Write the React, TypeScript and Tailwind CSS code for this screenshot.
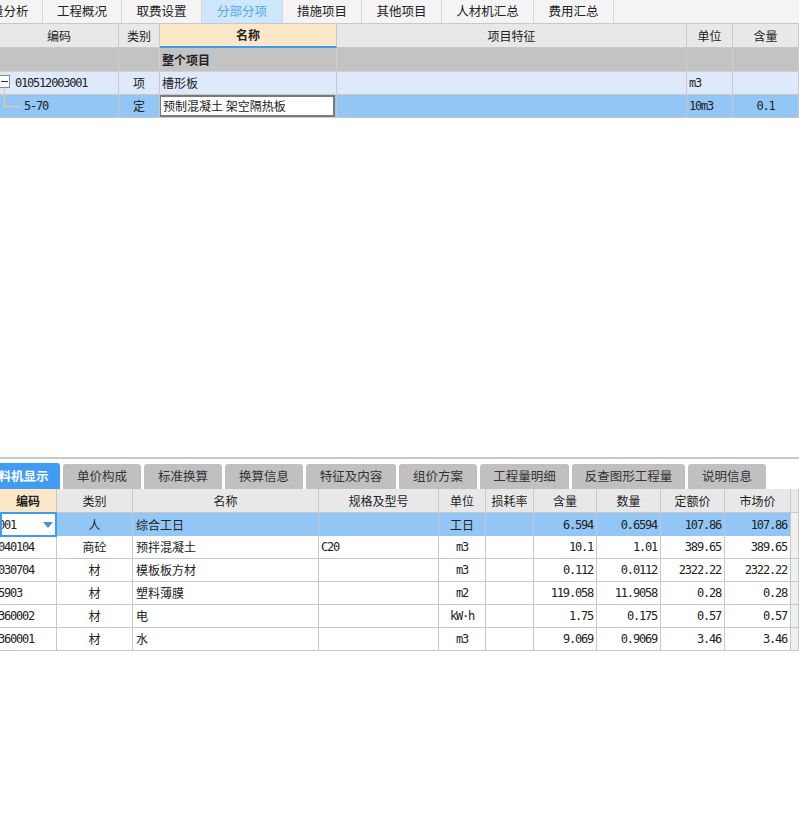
import React from "react";

const CJK = '"Noto Sans CJK SC", "Noto Sans", sans-serif';
const MONO = '"DejaVu Sans Mono", "Liberation Mono", monospace';
const monoStyle: React.CSSProperties = { fontFamily: MONO, fontSize: 12, letterSpacing: "-1.2px" };

type C = { t?: string; mono?: boolean; align?: "l" | "c" | "r"; bold?: boolean; cls?: string; node?: React.ReactNode };

function Cell({ t, mono, align = "l", bold, cls = "", node }: C) {
  const a = align === "c" ? "justify-center" : align === "r" ? "justify-end pr-[3px]" : "justify-start pl-[2px]";
  return (
    <div
      className={`flex items-center overflow-hidden whitespace-nowrap border-r border-b border-[#c8c8c8] ${a} ${bold ? "font-bold" : ""} ${cls}`}
      style={mono ? monoStyle : undefined}
    >
      {node ?? t}
    </div>
  );
}

const topTabs = [
  { w: 43, t: "量分析", cut: true },
  { w: 79, t: "工程概况" },
  { w: 80, t: "取费设置" },
  { w: 81, t: "分部分项", active: true },
  { w: 79, t: "措施项目" },
  { w: 80, t: "其他项目" },
  { w: 92, t: "人材机汇总" },
  { w: 80, t: "费用汇总" },
];

const bottomTabs = [
  { w: 78, t: "单价构成" },
  { w: 78, t: "标准换算" },
  { w: 78, t: "换算信息" },
  { w: 90, t: "特征及内容" },
  { w: 78, t: "组价方案" },
  { w: 89, t: "工程量明细" },
  { w: 113, t: "反查图形工程量" },
  { w: 78, t: "说明信息" },
];

const rows = [
  ["001", "人", "综合工日", "", "工日", "", "6.594", "0.6594", "107.86", "107.86"],
  ["040104", "商砼", "预拌混凝土", "C20", "m3", "", "10.1", "1.01", "389.65", "389.65"],
  ["030704", "材", "模板板方材", "", "m3", "", "0.112", "0.0112", "2322.22", "2322.22"],
  ["5903", "材", "塑料薄膜", "", "m2", "", "119.058", "11.9058", "0.28", "0.28"],
  ["360002", "材", "电", "", "kW·h", "", "1.75", "0.175", "0.57", "0.57"],
  ["360001", "材", "水", "", "m3", "", "9.069", "0.9069", "3.46", "3.46"],
];

export default function App() {
  const topGrid = "grid grid-cols-[119px_41px_177px_350px_46px_66px]";
  const botGrid = "grid grid-cols-[57px_76px_186px_120px_47px_48px_63px_64px_64px_66px_8px]";
  return (
    <div className="w-[799px] h-[826px] bg-white text-[12px] text-[#222] overflow-hidden flex flex-col" style={{ fontFamily: CJK }}>
      {/* top tabs */}
      <div className="flex h-[24px] bg-[#f4f4f4] border-b border-[#c8c8c8] shrink-0">
        {topTabs.map((tb, i) => (
          <div
            key={i}
            className={`flex items-center border-r border-[#d4d4d4] overflow-hidden whitespace-nowrap ${tb.cut ? "justify-start" : "justify-center"} ${tb.active ? "bg-[#cde7fd] text-[#57a7ee]" : ""}`}
            style={{ width: tb.w }}
          >
            <span className={`text-[12.5px] ${tb.cut ? "ml-[-9px]" : ""}`}>{tb.t}</span>
          </div>
        ))}
      </div>

      {/* top header */}
      <div className={`${topGrid} h-[24px] bg-[#e8e8e8] shrink-0`}>
        <Cell t="编码" align="c" />
        <Cell t="类别" align="c" />
        <Cell t="名称" align="c" bold cls="bg-[#fde7c9] !border-b-2 !border-b-[#3e9cf3]" />
        <Cell t="项目特征" align="c" />
        <Cell t="单位" align="c" />
        <Cell t="含量" align="c" />
      </div>
      <div className={`${topGrid} h-[24px] bg-[#c3c3c3] shrink-0`}>
        <Cell cls="!border-[#d0d0d0]" />
        <Cell cls="!border-[#d0d0d0]" />
        <Cell t="整个项目" bold cls="!border-[#d0d0d0]" />
        <Cell cls="!border-[#d0d0d0]" />
        <Cell cls="!border-[#d0d0d0]" />
        <Cell cls="!border-[#d0d0d0]" />
      </div>
      <div className={`${topGrid} h-[23px] bg-[#dee9fc] shrink-0`}>
        <Cell
          node={
            <div className="relative flex items-center h-full w-full">
              <div className="absolute left-[-3px] top-[3px] w-[11px] h-[13px] border border-[#8a8a8a] bg-white flex items-center justify-center">
                <div className="w-[7px] h-[1px] bg-[#333]" />
              </div>
              <div className="absolute left-[2px] top-[16px] w-[1px] h-[7px] bg-[#f3c98c]" />
              <span className="ml-[13px]" style={monoStyle}>010512003001</span>
            </div>
          }
        />
        <Cell t="项" align="c" />
        <Cell t="槽形板" />
        <Cell />
        <Cell t="m3" mono />
        <Cell />
      </div>
      <div className={`${topGrid} h-[23px] bg-[#92c7f5] shrink-0`}>
        <Cell
          node={
            <div className="relative flex items-center h-full w-full">
              <div className="absolute left-[2px] top-0 w-[1px] h-[12px] bg-[#f3c98c]" />
              <div className="absolute left-[2px] top-[11px] w-[16px] h-[1px] bg-[#f3c98c]" />
              <span className="ml-[22px]" style={monoStyle}>5-70</span>
            </div>
          }
        />
        <Cell t="定" align="c" />
        <Cell
          node={
            <div className="h-full w-full bg-white border-2 border-[#7a7a7a] flex items-center pl-[2px] ml-[-1px]">预制混凝土 架空隔热板</div>
          }
          cls="!pl-0"
        />
        <Cell />
        <Cell t="10m3" mono />
        <Cell t="0.1" mono align="c" />
      </div>

      {/* empty area */}
      <div className="h-[339px] shrink-0 bg-white" />

      {/* separator */}
      <div className="h-[2px] bg-[#c8c8c8] shrink-0" />
      <div className="h-[4px] shrink-0" />

      {/* bottom tabs */}
      <div className="flex h-[26px] shrink-0 items-end gap-[3px]">
        <div className="w-[60px] h-[26px] bg-[#3f9cf2] text-white font-bold flex items-center overflow-hidden whitespace-nowrap rounded-tr-[3px]">
          <span className="ml-[-14px] text-[12.5px]">工料机显示</span>
        </div>
        {bottomTabs.map((tb, i) => (
          <div
            key={i}
            className="h-[25px] bg-[#c0c0c0] rounded-t-[3px] flex items-center justify-center text-[12.5px] text-[#333] whitespace-nowrap"
            style={{ width: tb.w }}
          >
            {tb.t}
          </div>
        ))}
      </div>

      {/* bottom header */}
      <div className={`${botGrid} h-[24px] bg-[#e8e8e8] shrink-0`}>
        <Cell t="编码" align="c" bold cls="bg-[#fde7c9]" />
        <Cell t="类别" align="c" />
        <Cell t="名称" align="c" />
        <Cell t="规格及型号" align="c" />
        <Cell t="单位" align="c" />
        <Cell t="损耗率" align="c" />
        <Cell t="含量" align="c" />
        <Cell t="数量" align="c" />
        <Cell t="定额价" align="c" />
        <Cell t="市场价" align="c" />
        <Cell />
      </div>
      {rows.map((r, i) => {
        const sel = i === 0;
        return (
          <div key={i} className={`${botGrid} h-[23px] shrink-0 ${sel ? "bg-[#92c7f5]" : "bg-white"}`}>
            {sel ? (
              <div className="relative h-[25px] mt-[-1px] bg-white border-2 border-[#3e9cf3] flex items-center overflow-hidden whitespace-nowrap z-10">
                <span className="ml-[-4px]" style={monoStyle}>001</span>
                <svg className="absolute left-[41px] top-[8px]" width="10" height="6" viewBox="0 0 10 6">
                  <path d="M0 0 L10 0 L5 6 Z" fill="#4a8fd0" />
                </svg>
              </div>
            ) : (
              <Cell node={<span className="ml-[-2px]" style={monoStyle}>{r[0]}</span>} cls="!pl-0" />
            )}
            <Cell t={r[1]} align="c" />
            <Cell t={r[2]} cls="!pl-[3px]" />
            <Cell t={r[3]} mono />
            <Cell t={r[4]} mono={i !== 0} align="c" />
            <Cell t={r[5]} />
            <Cell t={r[6]} mono align="r" />
            <Cell t={r[7]} mono align="r" />
            <Cell t={r[8]} mono align="r" />
            <Cell t={r[9]} mono align="r" />
            <Cell cls="bg-[#f0f0f0]" />
          </div>
        );
      })}
      <div className="flex-1 bg-white" />
    </div>
  );
}
